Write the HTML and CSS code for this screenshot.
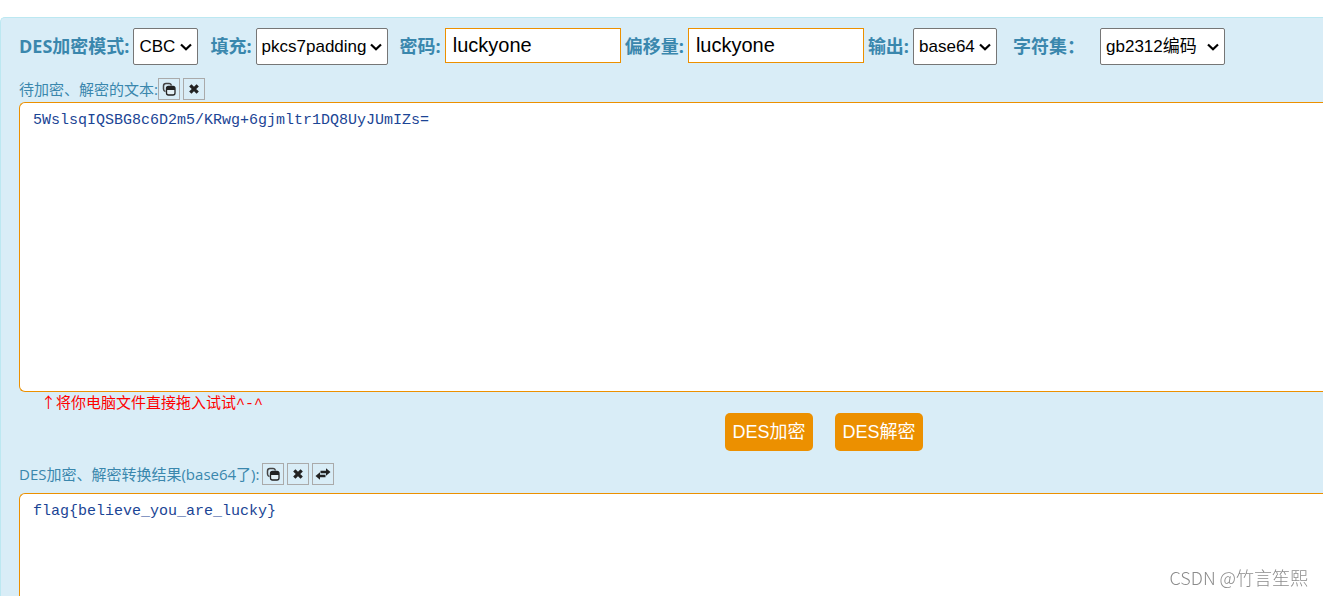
FILE: index.html
```html
<!DOCTYPE html>
<html lang="zh-CN">
<head>
<meta charset="utf-8">
<title>DES加密、解密</title>
<link rel="stylesheet" href="styles.css">
</head>
<body>
<svg class="sprite" aria-hidden="true">
  <symbol id="i-copy" viewBox="0 0 14 14">
    <path d="M3.500 9.500Q1.500 9 1.500 7V4Q1.500 1.500 4 1.500H7Q9 1.500 9.300 3.500" fill="none" stroke="#444" stroke-width="1.500"/>
    <rect x="4.500" y="4.500" width="8.500" height="8.500" rx="2" fill="#e4f0f5" stroke="#222" stroke-width="1.300"/>
    <path d="M4.500 8V6.500Q4.500 4.500 6.500 4.500H11Q13 4.500 13 6.500V8Z" fill="#222"/>
  </symbol>
  <symbol id="i-close" viewBox="0 0 14 14">
    <path d="M3.300 3.300L10.700 10.700M10.700 3.300L3.300 10.700" stroke="#222" stroke-width="3.200"/>
  </symbol>
  <symbol id="i-swap" viewBox="0 0 16 14">
    <path d="M5.500 3.800H11V1.200L15.500 5L11 8.800V6.200H5.500ZM10.500 7.800V10.200H5V12.800L.5 9L5 5.200V7.800Z" fill="#222"/>
  </symbol>
</svg>
<main class="panel">
  <div class="options">
    <label class="name" for="mode">DES加密模式:</label>
    <select class="pick pick-mode" id="mode"><option>CBC</option></select>
    <label class="name name-spaced" for="pad">填充:</label>
    <select class="pick pick-pad" id="pad"><option>pkcs7padding</option></select>
    <label class="name name-spaced" for="key">密码:</label>
    <input class="field" id="key" type="text" value="luckyone">
    <label class="name" for="iv">偏移量:</label>
    <input class="field" id="iv" type="text" value="luckyone">
    <label class="name" for="out">输出:</label>
    <select class="pick pick-out" id="out"><option>base64</option></select>
    <label class="name name-charset" for="charset">字符集：</label>
    <select class="pick pick-charset" id="charset"><option>gb2312编码</option></select>
  </div>
  <div class="caption caption-source">
    <label for="source">待加密、解密的文本:</label>
    <button class="tool" type="button" aria-label="复制"><svg class="icon"><use href="#i-copy"/></svg></button>
    <button class="tool" type="button" aria-label="清空"><svg class="icon"><use href="#i-close"/></svg></button>
  </div>
  <textarea class="text text-source" id="source" spellcheck="false">5WslsqIQSBG8c6D2m5/KRwg+6gjmltr1DQ8UyJUmIZs=</textarea>
  <p class="hint"><span class="arrow">↑</span>将你电脑文件直接拖入试试<span class="face">^-^</span></p>
  <div class="actions">
    <button class="action" type="button">DES加密</button>
    <button class="action" type="button">DES解密</button>
  </div>
  <div class="caption caption-result">
    <label for="result">DES加密、解密转换结果(base64了):</label>
    <button class="tool" type="button" aria-label="复制"><svg class="icon"><use href="#i-copy"/></svg></button>
    <button class="tool" type="button" aria-label="清空"><svg class="icon"><use href="#i-close"/></svg></button>
    <button class="tool" type="button" aria-label="交换"><svg class="icon icon-wide"><use href="#i-swap"/></svg></button>
  </div>
  <textarea class="text text-result" id="result" spellcheck="false">flag{believe_you_are_lucky}</textarea>
</main>
<div class="watermark">CSDN @竹言笙熙</div>
</body>
</html>
```
FILE: styles.css
```css
* { box-sizing: border-box; }
body {
  display: flex;
  flex-direction: column;
  margin: 0;
  padding-top: 17px;
  min-height: 100vh;
  background: #fff;
  font-family: "Open Sans", "Noto Sans CJK SC", sans-serif;
}
.sprite { display: none; }
.panel {
  display: flex;
  flex-direction: column;
  flex: 1;
  padding: 10px 0 0 18px;
  border: 1px solid #bce8f1;
  border-width: 1px 0 0 1px;
  border-radius: 5px 0 0 0;
  background: #d9edf7;
  color: #3a87ad;
}
.options {
  display: flex;
  align-items: flex-start;
  gap: 4px;
  height: 50px;
  white-space: nowrap;
}
.name {
  font-size: 18px;
  font-weight: 700;
  line-height: 36px;
}
.name-spaced { margin-left: 8px; }
.name-charset { margin-left: 12px; }
.pick, .field {
  flex: none;
  background-color: #fff;
  color: #000;
  font-family: "Liberation Sans", "Noto Sans CJK SC", sans-serif;
}
.pick {
  height: 37px;
  padding: 0 5px;
  border: 1px solid #767676;
  border-radius: 2px;
  appearance: none;
  background-image: url("data:image/svg+xml,%3Csvg xmlns='http://www.w3.org/2000/svg' width='12' height='8'%3E%3Cpath d='M1 1.500L6 6.300L11 1.500' fill='none' stroke='%23000' stroke-width='2.200'/%3E%3C/svg%3E");
  background-repeat: no-repeat;
  background-position: right 5px center;
  font-size: 17px;
}
.pick-mode { width: 65px; }
.pick-pad { width: 132px; }
.pick-out { width: 84px; }
.pick-charset { width: 125px; margin-left: 11px; }
.field {
  width: 176px;
  height: 35px;
  padding: 0 7px;
  border: 1px solid #ec9000;
  font-size: 20px;
}
.caption {
  display: flex;
  align-items: flex-start;
  gap: 3px;
  font-size: 15px;
  line-height: 22px;
}
.caption-source { margin-bottom: 2px; }
.caption-source label { margin-right: -3px; }
.caption-result { margin-bottom: 8px; }
.tool {
  display: grid;
  place-items: center;
  width: 22px;
  height: 22px;
  padding: 0;
  border: 1px solid #aaa;
  background: transparent;
}
.icon { width: 14px; height: 14px; }
.icon-wide { width: 16px; }
.text {
  display: block;
  width: 100%;
  padding: 8px 13px;
  border: 1px solid #ec9000;
  border-right: 0;
  background: #fff;
  color: #1b4595;
  font-family: "Liberation Mono", monospace;
  font-size: 15px;
  line-height: 20px;
  resize: none;
}
.text-source {
  height: 290px;
  border-radius: 6px 0 0 6px;
}
.text-result {
  flex: 1;
  border-bottom: 0;
  border-radius: 6px 0 0 0;
}
.hint {
  height: 21px;
  margin: 0;
  padding-left: 22px;
  color: #f00;
  font-size: 15px;
  line-height: 20px;
}
.arrow { font-family: "Noto Sans CJK SC", sans-serif; }
.face { font-family: "Liberation Mono", monospace; }
.actions {
  display: flex;
  justify-content: center;
  gap: 22px;
  padding: 0 0 12px 306px;
}
.action {
  width: 88px;
  height: 38px;
  padding: 0 0 4px;
  border: 0;
  border-radius: 5px;
  background: #ec9000;
  color: #fff;
  font-family: "Liberation Sans", "Noto Sans CJK SC", sans-serif;
  font-size: 18px;
}
.watermark {
  position: fixed;
  right: 15px;
  bottom: 7px;
  color: #8c8c8c;
  font-family: "Noto Sans CJK SC", sans-serif;
  font-size: 18px;
  font-weight: 300;
  line-height: 24px;
}
```
